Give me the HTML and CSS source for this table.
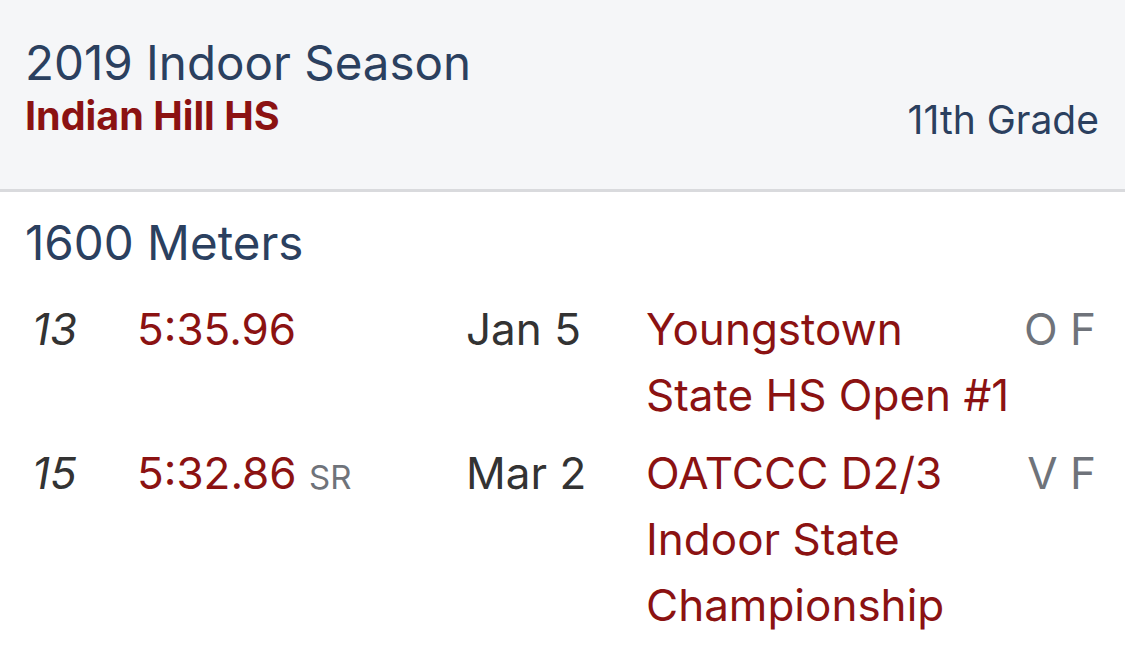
FILE: index.html
```html
<!DOCTYPE html>
<html>
<head>
<meta charset="utf-8">
<link rel="stylesheet" href="styles.css">
</head>
<body>
<header class="season">
  <div class="season-text">
    <div class="season-title">2019 Indoor Season</div>
    <div class="school">Indian Hill HS</div>
  </div>
  <div class="grade">11th Grade</div>
</header>
<section class="event">
  <h2 class="event-name">1600 Meters</h2>
  <div class="results">
    <div class="place">13</div>
    <div class="mark">5:35.96</div>
    <div class="date">Jan 5</div>
    <div class="meet">Youngstown State HS Open #1</div>
    <div class="level">O F</div>

    <div class="place">15</div>
    <div class="mark">5:32.86 <span class="tag">SR</span></div>
    <div class="date">Mar 2</div>
    <div class="meet">OATCCC D2/3 Indoor State Championship</div>
    <div class="level">V F</div>
  </div>
</section>
</body>
</html>
```

FILE: styles.css
```css
html, body {
  margin: 0;
  padding: 0;
  background: #ffffff;
  font-family: Inter, "Noto Sans", sans-serif;
}
.season {
  background: #f5f6f8;
  border-bottom: 3px solid #d9dadd;
  height: 189px;
  box-sizing: content-box;
  display: flex;
  justify-content: space-between;
  align-items: flex-start;
  padding: 0 26px 0 25px;
}
.season-text {
  padding-top: 35px;
}
.season-title {
  color: #2b405f;
  font-size: 47.5px;
  line-height: 56px;
}
.school {
  color: #8b1212;
  font-size: 39.5px;
  font-weight: 700;
  line-height: 50px;
}
.grade {
  color: #2b405f;
  font-size: 39px;
  line-height: 48px;
  padding-top: 96px;
}
.event {
  padding: 0 26px 0 25px;
}
.event-name {
  margin: 0;
  padding-top: 24px;
  color: #2b405f;
  font-size: 47.5px;
  font-weight: 400;
  line-height: 54px;
}
.results {
  display: grid;
  grid-template-columns: 112px 329px 180px 367px 1fr;
  padding-top: 26px;
  row-gap: 12px;
  font-size: 44px;
  line-height: 66px;
}
.place {
  padding-left: 7px;
  font-style: italic;
  color: #333;
}
.mark {
  color: #8b1212;
}
.tag {
  color: #6f737a;
  font-size: 33px;
}
.date {
  color: #333;
}
.meet {
  color: #8b1212;
}
.level {
  color: #6f737a;
  text-align: right;
  padding-right: 3px;
}
```
